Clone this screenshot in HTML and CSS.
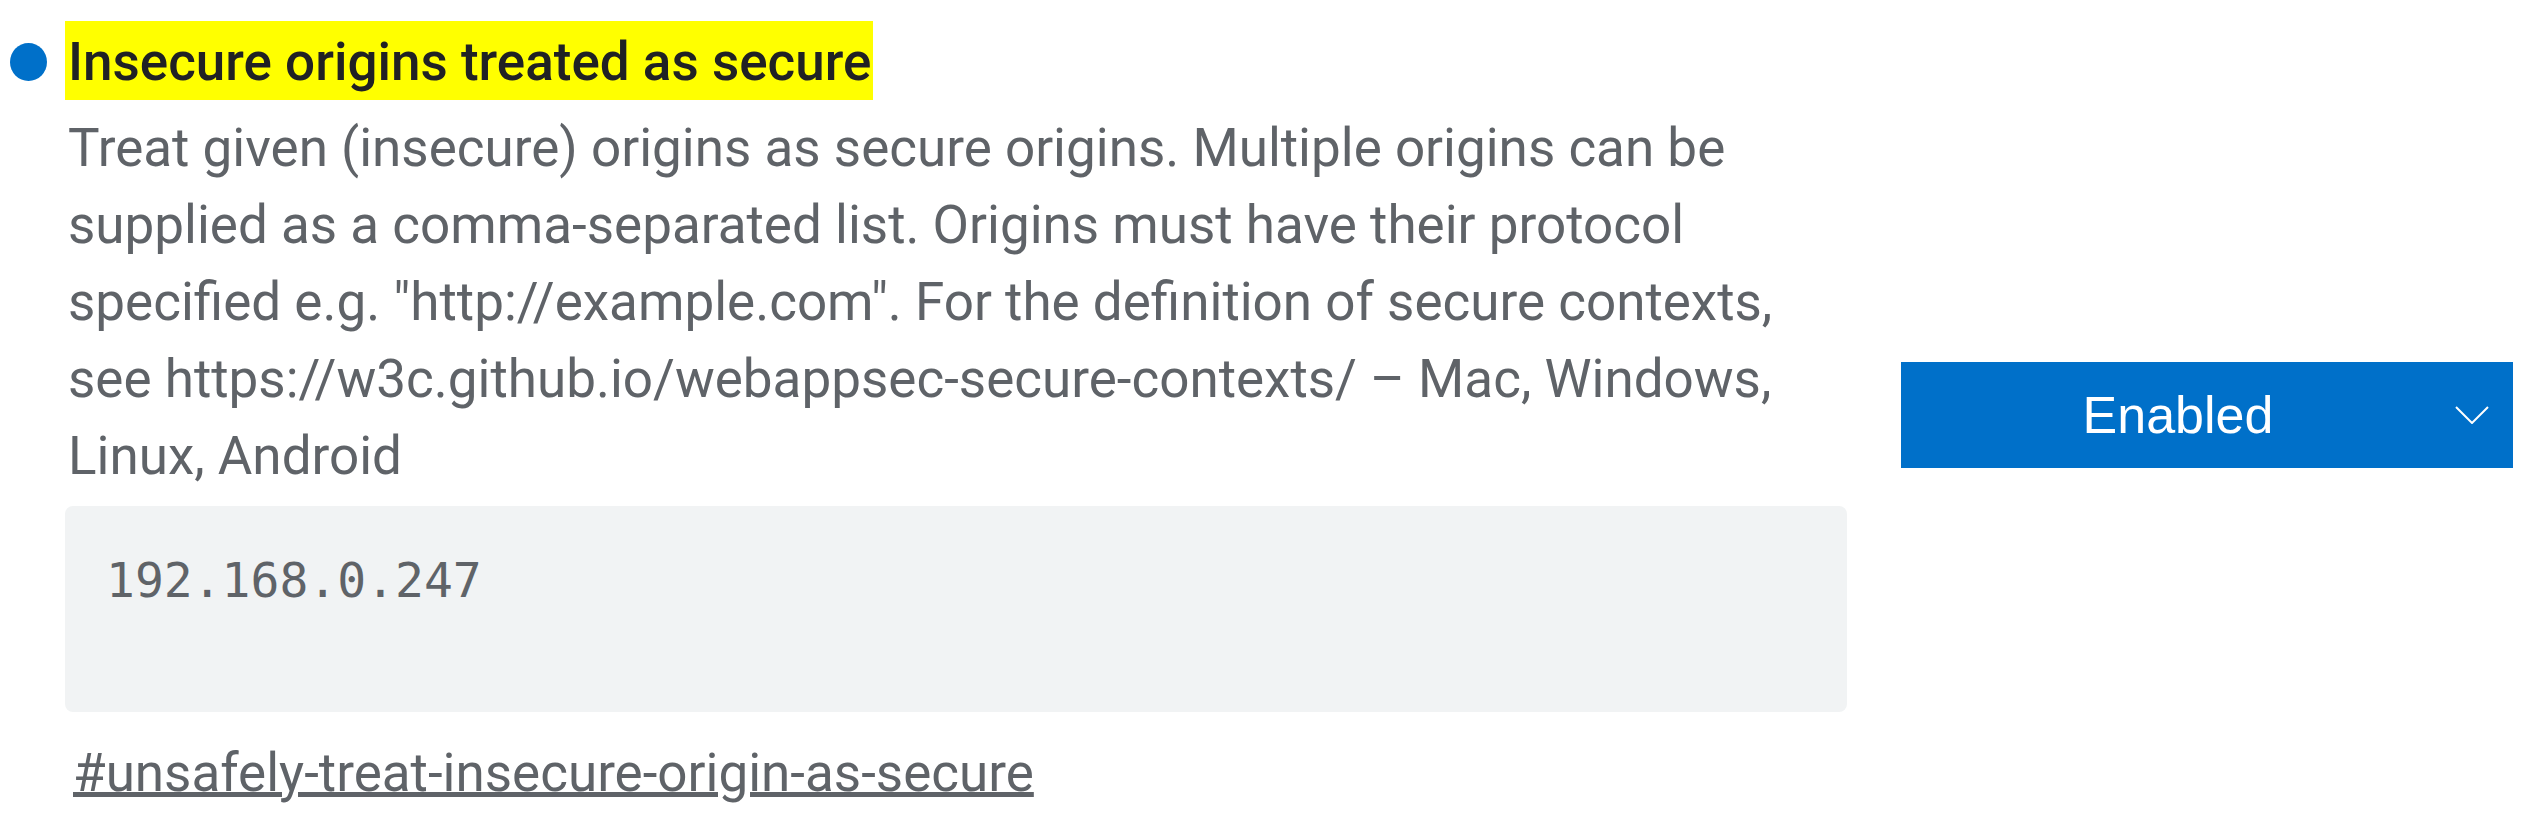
FILE: index.html
```html
<!DOCTYPE html>
<html lang="en">
<head>
    <meta charset="UTF-8">
    <meta name="viewport" content="width=device-width, initial-scale=1.0">
    <title>Experiments</title>
    <link rel="stylesheet" href="styles.css">
</head>
<body>
    <div class="experiment">
        <div class="experiment-text">
            <h3 class="experiment-name">
                <span class="dot"></span>
                <span class="highlight">Insecure origins treated as secure</span>
            </h3>
            <p class="experiment-desc">Treat given (insecure) origins as secure origins. Multiple origins can be supplied as a comma-separated list. Origins must have their protocol specified e.g. "http://example.com". For the definition of secure contexts, see https://w3c.github.io/webappsec-secure-contexts/ – Mac, Windows, Linux, Android</p>
            <textarea class="origin-list" spellcheck="false">192.168.0.247</textarea>
            <a class="permalink" href="#unsafely-treat-insecure-origin-as-secure">#unsafely-treat-insecure-origin-as-secure</a>
        </div>
        <div class="experiment-select">
            <span class="select-label">Enabled</span>
            <svg class="chevron" width="34" height="18" viewBox="0 0 34 18">
                <path d="M1 1 L17 17 L33 1" fill="none" stroke="#fff" stroke-width="2"/>
            </svg>
        </div>
    </div>
</body>
</html>
```

FILE: styles.css
```css
body {
    margin: 0;
    background: #fff;
    font-family: Roboto, "Noto Sans", sans-serif;
}

.experiment {
    display: flex;
    align-items: flex-start;
    gap: 54px;
    padding: 21px 16px 0 65px;
}

.experiment-text {
    width: 1782px;
    flex-shrink: 0;
}

.experiment-name {
    position: relative;
    margin: 0;
    font-size: 53px;
    font-weight: 500;
    line-height: 76px;
    color: #202124;
}

.dot {
    position: absolute;
    left: -55px;
    top: 22px;
    width: 37px;
    height: 38px;
    border-radius: 50%;
    background: #0070c9;
}

.highlight {
    display: inline-block;
    background: #ffff00;
    padding: 3px 2px 0 3px;
}

.experiment-desc {
    margin: 10px 0 0;
    padding-left: 3px;
    font-size: 53px;
    line-height: 77px;
    color: #5f6368;
}

.origin-list {
    display: block;
    box-sizing: border-box;
    width: 100%;
    height: 206px;
    margin-top: 11px;
    padding: 46px 41px;
    border: none;
    border-radius: 8px;
    background: #f1f3f4;
    color: #5f6368;
    font-family: "DejaVu Sans Mono", monospace;
    font-size: 48px;
    resize: none;
    outline: none;
}

.permalink {
    display: inline-block;
    margin: 30px 0 0 8px;
    font-size: 53px;
    color: #5f6368;
    text-decoration-thickness: 5px;
    text-underline-offset: 1px;
}

.experiment-select {
    display: flex;
    align-items: center;
    width: 612px;
    height: 106px;
    margin-top: 341px;
    padding-right: 24px;
    box-sizing: border-box;
    background: #0070c9;
    color: #fff;
}

.select-label {
    flex: 1;
    text-align: center;
    font-family: "Liberation Sans", Arial, sans-serif;
    font-size: 52px;
}

.chevron {
    display: block;
}
```
